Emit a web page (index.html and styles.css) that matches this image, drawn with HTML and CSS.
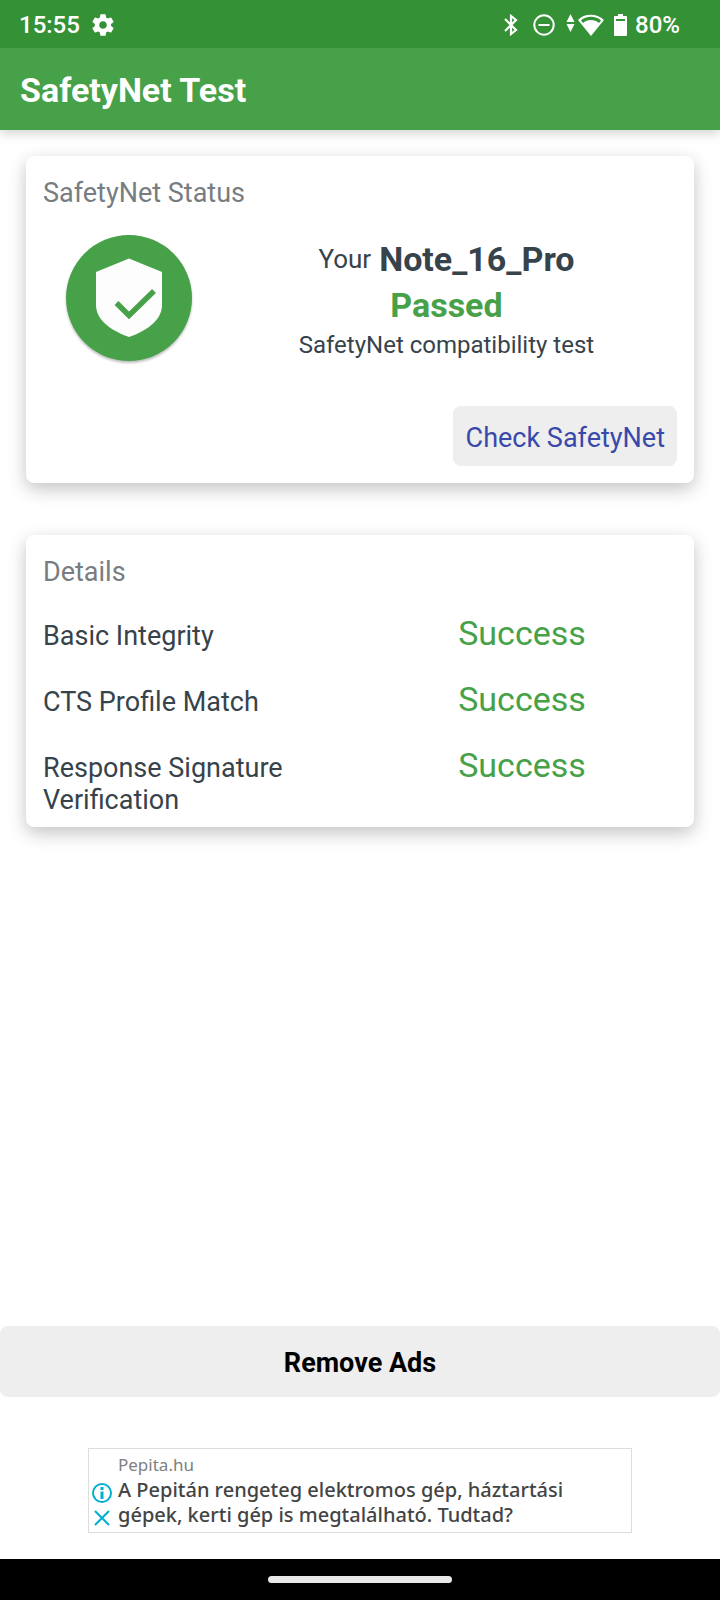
FILE: index.html
```html
<!DOCTYPE html>
<html lang="en">
  <head>
    <title>SafetyNet Test</title>
    <meta charset="utf-8">
    <meta name="viewport" content="width=device-width, initial-scale=1">
    <link rel="stylesheet" href="styles.css">
  </head>
  <body>

  <div class="statusbar">
    <span class="clock">15:55</span>
    <svg class="gear" width="26" height="26" viewBox="0 0 24 24" fill="#fff"><path d="M19.43 12.98c.04-.32.07-.64.07-.98s-.03-.66-.07-.98l2.11-1.65c.19-.15.24-.42.12-.64l-2-3.46c-.12-.22-.39-.3-.61-.22l-2.49 1c-.52-.4-1.08-.73-1.69-.98l-.38-2.65C14.46 2.18 14.25 2 14 2h-4c-.25 0-.46.18-.49.42l-.38 2.65c-.61.25-1.17.59-1.69.98l-2.49-1c-.23-.09-.49 0-.61.22l-2 3.46c-.13.22-.07.49.12.64l2.11 1.65c-.04.32-.07.65-.07.98s.03.66.07.98l-2.11 1.65c-.19.15-.24.42-.12.64l2 3.46c.12.22.39.3.61.22l2.49-1c.52.4 1.08.73 1.69.98l.38 2.65c.03.24.24.42.49.42h4c.25 0 .46-.18.49-.42l.38-2.65c.61-.25 1.17-.59 1.69-.98l2.49 1c.23.09.49 0 .61-.22l2-3.46c.12-.22.07-.49-.12-.64l-2.11-1.65zM12 15.5c-1.93 0-3.5-1.57-3.5-3.5s1.57-3.5 3.5-3.5 3.5 1.57 3.5 3.5-1.57 3.5-3.5 3.5z"/></svg>
    <div class="indicators">
      <svg width="14" height="22" viewBox="0 0 14 22" fill="none" stroke="#fff" stroke-width="2.200"><path d="M1 5l11 11-5 4V2l5 4L1 17"/></svg>
      <svg class="dnd" width="22" height="22" viewBox="0 0 22 22" fill="none" stroke="#fff" stroke-width="2"><circle cx="11" cy="11" r="9.7"/><path d="M5.500 11h11"/></svg>
      <svg class="wifi" width="38" height="22" viewBox="0 0 38 22" fill="#fff"><path d="M4.500 0l4 8h-8zM.5 10h8l-4 8z"/><path fill-rule="evenodd" d="M12 6C18-1 31-1 38 6L25 22zM15 6.500l2 2.500c4-4 12-4 16 0l2-2.500c-5-5-15-5-20 0z"/></svg>
      <svg class="battery" width="13" height="22" viewBox="0 0 13 22" fill="#fff"><path fill-rule="evenodd" d="M4 0h5v2h3q1 0 1 1v18q0 1-1 1H1q-1 0-1-1V3q0-1 1-1h3zM2 5v2h9V5z"/></svg>
      <span>80%</span>
    </div>
  </div>

  <header class="appbar">
    <h1>SafetyNet Test</h1>
  </header>

  <main>
    <section class="card status">
      <h2>SafetyNet Status</h2>
      <div class="result">
        <svg class="badge" width="130" height="132" viewBox="0 0 130 132">
          <circle class="badge-disc" cx="65" cy="65" r="63" fill="#47a148"/>
          <path d="M65 25.500L98 39v33c0 17-19 27-33 32-14-5-33-15-33-32V39z" fill="#fdfdfd"/>
          <path d="M52.500 70L65 82.500 90 58" fill="none" stroke="#47a148" stroke-width="5.500"/>
        </svg>
        <div class="verdict">
          <p class="device"><span>Your</span> <strong>Note_16_Pro</strong></p>
          <p class="passed">Passed</p>
          <p class="test">SafetyNet compatibility test</p>
        </div>
      </div>
      <button class="check" type="button">Check SafetyNet</button>
    </section>

    <section class="card details">
      <h2>Details</h2>
      <dl>
        <dt>Basic Integrity</dt>
        <dd>Success</dd>
        <dt>CTS Profile Match</dt>
        <dd>Success</dd>
        <dt>Response Signature Verification</dt>
        <dd>Success</dd>
      </dl>
    </section>
  </main>

  <button class="remove" type="button">Remove Ads</button>

  <aside class="ad">
    <div class="ad-icons">
      <button type="button" aria-label="Ad info"><svg width="20" height="20" viewBox="0 0 20 20" fill="none" stroke="#00aecd" stroke-width="2"><circle cx="10" cy="10" r="9"/><path d="M10 4v3M10 8.500V16" stroke-width="3"/></svg></button>
      <button type="button" aria-label="Close ad"><svg width="20" height="20" viewBox="0 0 20 20" fill="none" stroke="#00aecd" stroke-width="2"><path d="M3 3l14 14M17 3L3 17"/></svg></button>
    </div>
    <div class="ad-text" lang="hu">
      <a class="ad-site" href="#">Pepita.hu</a>
      <a class="ad-copy" href="#">A Pepitán rengeteg elektromos gép, háztartási gépek, kerti gép is megtalálható. Tudtad?</a>
    </div>
  </aside>

  <nav class="navbar"><span class="pill"></span></nav>

  </body>
</html>
```
FILE: styles.css
```css
* {
  box-sizing: border-box;
}
body {
  margin: 0;
  min-height: 100vh;
  display: flex;
  flex-direction: column;
  background: #fff;
  color: #37434b;
  font-family: Roboto, sans-serif;
  font-size: 27px;
  line-height: 32px;
}
h1, h2, p, dl, dd {
  margin: 0;
}
svg {
  display: block;
}
button {
  border: 0;
  padding: 0;
  font: inherit;
  cursor: pointer;
}
.statusbar {
  height: 48px;
  padding: 1px 40px 0 19px;
  display: flex;
  align-items: center;
  background: #349136;
  color: #fff;
  font-size: 24px;
  font-weight: 500;
}
.gear {
  margin-left: 10px;
}
.indicators {
  margin-left: auto;
  display: flex;
  align-items: center;
}
.dnd {
  margin-left: 15px;
}
.wifi {
  margin-left: 11px;
}
.battery {
  margin: 0 8px 0 10px;
}
.appbar {
  height: 82px;
  padding: 2px 20px 0;
  display: flex;
  align-items: center;
  background: #47a148;
  color: #fff;
  box-shadow: 0 4px 10px rgba(0,0,0,0.16);
  clip-path: inset(0 0 -20px 0);
}
h1 {
  font-size: 34px;
  font-weight: bold;
}
main {
  padding: 26px;
  display: flex;
  flex-direction: column;
  gap: 52px;
}
.card {
  padding: 21px 17px 17px;
  display: flex;
  flex-direction: column;
  border-radius: 8px;
  background: #fff;
  box-shadow: 0 6px 18px rgba(0,0,0,0.24);
}
h2 {
  color: #777d81;
  font-size: 27px;
  font-weight: normal;
}
.result {
  padding-top: 24px;
  display: grid;
  grid-template-columns: 3fr 8fr;
}
.badge {
  justify-self: center;
}
.badge-disc {
  filter: drop-shadow(0 2px 1px rgba(0,0,0,0.25));
}
.verdict {
  padding-top: 3px;
  text-align: center;
}
.device {
  display: flex;
  justify-content: center;
  align-items: center;
  gap: 8px;
  font-size: 26px;
  line-height: 46px;
}
.device strong,
.passed {
  font-size: 34px;
  font-weight: bold;
}
.passed {
  color: #47a148;
  line-height: 46px;
}
.test {
  padding-top: 1px;
  font-size: 24px;
}
.check {
  align-self: flex-end;
  height: 60px;
  margin-top: 41px;
  padding: 4px 12px 0 13px;
  border-radius: 8px;
  background: #eee;
  color: #3949ab;
}
.details {
  padding-bottom: 11px;
}
dl {
  padding-top: 32px;
  display: grid;
  grid-template-columns: 1fr 1fr;
  gap: 34px 14px;
}
dd {
  height: 32px;
  color: #47a148;
  font-size: 34px;
  line-height: 27px;
  text-align: center;
}
.remove {
  height: 71px;
  margin-top: auto;
  padding-top: 2px;
  border-radius: 8px;
  background: #eee;
  color: #000;
  font-weight: bold;
}
.ad {
  width: calc(100% - 176px);
  margin: 51px auto 26px;
  padding: 4px 3px;
  display: flex;
  gap: 6px;
  border: 1px solid #ddd;
}
.ad-icons {
  padding-top: 30px;
  display: flex;
  flex-direction: column;
  gap: 5px;
}
.ad-icons button {
  background: none;
}
.ad-text {
  font-family: "Noto Sans", sans-serif;
}
.ad-text a {
  display: block;
  text-decoration: none;
}
.ad-site {
  color: #808080;
  font-size: 17px;
  line-height: 24px;
}
.ad-copy {
  color: #444;
  font-size: 20px;
  font-weight: 500;
  line-height: 25px;
}
.navbar {
  height: 41px;
  display: flex;
  justify-content: center;
  align-items: center;
  background: #000;
}
.pill {
  width: 184px;
  height: 7px;
  border-radius: 4px;
  background: #e8e8e8;
}
```
